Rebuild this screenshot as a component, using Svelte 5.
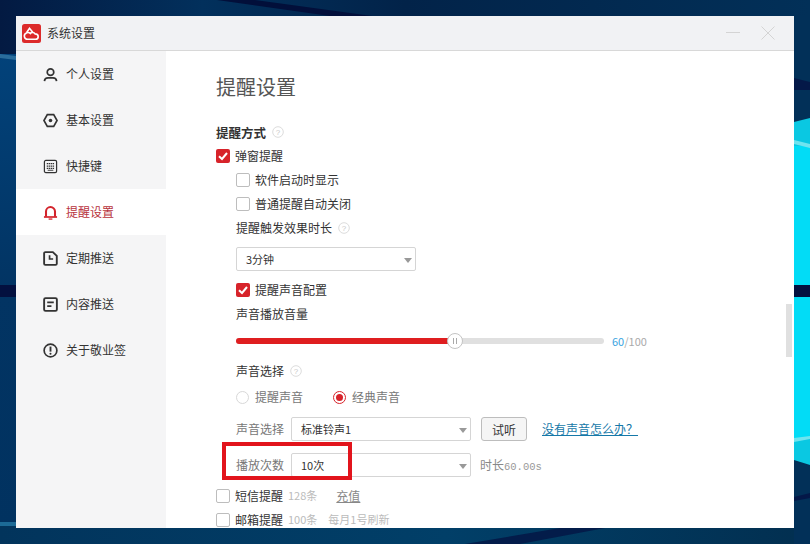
<script>
  const nav = [
    { label: '个人设置', icon: 'user' },
    { label: '基本设置', icon: 'hex' },
    { label: '快捷键', icon: 'kbd' },
    { label: '提醒设置', icon: 'bell', active: true },
    { label: '定期推送', icon: 'clock' },
    { label: '内容推送', icon: 'doc' },
    { label: '关于敬业签', icon: 'info' }
  ];
</script>

{#snippet help()}
  <svg class="help" width="12" height="12" viewBox="0 0 12 12">
    <circle cx="6" cy="6" r="5.3" fill="none" stroke="#dcdcdc" />
    <text x="6" y="8.8" text-anchor="middle" font-size="8" fill="#c8c8c8" font-family="Liberation Sans, sans-serif">?</text>
  </svg>
{/snippet}

{#snippet check(on)}
  <span class="cb" class:on>
    {#if on}
      <svg width="14" height="14" viewBox="0 0 14 14"><path d="M3 7.2 6 10 11 4" fill="none" stroke="#fff" stroke-width="2" /></svg>
    {/if}
  </span>
{/snippet}

{#snippet caret()}
  <span class="caret"></span>
{/snippet}

<div class="desktop">
  <svg class="wall" width="810" height="544" viewBox="0 0 810 544" preserveAspectRatio="none">
    <defs>
      <linearGradient id="top" x1="0" y1="0" x2="1" y2="0">
        <stop offset="0" stop-color="#031a42" />
        <stop offset="0.25" stop-color="#02305c" />
        <stop offset="0.5" stop-color="#022349" />
        <stop offset="1" stop-color="#023058" />
      </linearGradient>
      <linearGradient id="left" x1="0" y1="0" x2="0" y2="1">
        <stop offset="0" stop-color="#02427a" />
        <stop offset="0.5" stop-color="#023463" />
        <stop offset="1" stop-color="#013260" />
      </linearGradient>
      <linearGradient id="bottom" x1="0" y1="0" x2="1" y2="0">
        <stop offset="0" stop-color="#02345c" />
        <stop offset="0.55" stop-color="#013f68" />
        <stop offset="1" stop-color="#022f50" />
      </linearGradient>
    </defs>
    <rect width="810" height="544" fill="url(#top)" />
    <rect y="54" width="16" height="474" fill="url(#left)" />
    <rect y="526" width="810" height="18" fill="url(#bottom)" />
    <path d="M0 54 L16 56 L16 60 L0 58 Z" fill="#2a6d9c" />
    <path d="M0 522 L16 522 L16 526 L0 526 Z" fill="#1c6a96" />
    <rect y="285" width="16" height="12" fill="#03103f" />
    <path d="M217 0 L255 0 L372 16 L330 16 Z" fill="#020f3a" />
    <path d="M465 544 L520 544 L605 528 L560 528 Z" fill="#031c4a" />
    <rect x="794" y="16" width="16" height="104" fill="#023058" />
    <path d="M794 78 L810 82 L810 90 L794 90 Z" fill="#041848" />
    <path d="M794 122 L810 118 L810 465 L794 460 Z" fill="#0ac8e2" />
    <rect x="794" y="146" width="16" height="292" fill="#02dcf6" />
    <path d="M794 140 L810 144 L810 148 L794 144 Z" fill="#6fe4ef" />
    <path d="M794 438 L810 436 L810 439 L794 442 Z" fill="#6fe4ef" />
    <rect x="794" y="285" width="16" height="12" fill="#03103f" />
    <path d="M794 462 L810 466 L810 544 L794 544 Z" fill="#023058" />
    <path d="M794 497 L810 493 L810 498 L794 501 Z" fill="#041848" />
  </svg>

  <main class="window">
    <header class="title">
      <svg class="logo" width="19" height="19" viewBox="0 0 19 19">
        <rect width="19" height="19" rx="2.5" fill="#dc2a2a" />
        <path d="M4.500 8.800 7.500 4.300l3.300 3.900" fill="none" stroke="#fff" stroke-width="1.600" />
        <path d="M5.600 15.300a3.300 3.300 0 0 1-1.100-6.400c1.400-.7 2.900-.4 3.800.6 1-1.500 3.800-1.500 4.800.4 1.700.1 3.100 1.200 3.100 2.800 0 1.500-1.200 2.600-2.700 2.600Z" fill="none" stroke="#fff" stroke-width="1.600" />
      </svg>
      <span class="title-text">系统设置</span>
      <span class="win-btns">
        <svg width="14" height="2" viewBox="0 0 14 2"><rect width="14" height="1" fill="#d4d4d4" /></svg>
        <svg width="14" height="14" viewBox="0 0 14 14"><path d="M.5.5l13 13M13.500.5l-13 13" stroke="#d4d4d4" fill="none" /></svg>
      </span>
    </header>

    <div class="body">
      <nav class="side">
        {#each nav as n}
          <div class="nav" class:active={n.active}>
            <svg class="ic" width="15" height="15" viewBox="0 0 16 16" fill="none" stroke="currentColor" stroke-width="1.800">
              {#if n.icon === 'user'}
                <circle cx="8" cy="5.500" r="3.500" />
                <path d="M1.500 15c.3-2.700 2.200-3.400 3.800-3.400h5.400c1.600 0 3.500.7 3.800 3.400" />
              {:else if n.icon === 'hex'}
                <path d="M4.600 1.700h6.800L15 8l-3.600 6.300H4.600L1 8Z" />
                <circle cx="8" cy="8" r="1.900" fill="currentColor" stroke="none" />
              {:else if n.icon === 'kbd'}
                <rect x="1.500" y="1.500" width="13" height="13" rx="1.500" stroke-width="1.300" />
                <path d="M4 5h8M4 7.500h8M4 10h8" stroke-width="1.300" stroke-dasharray="1.500 .6" />
                <path d="M5 12h6" stroke-width="1" />
              {:else if n.icon === 'bell'}
                <path d="M3.200 12.500V7a4.800 4.800 0 0 1 9.600 0v5.500" stroke-width="2.200" />
                <path d="M1 12.800h14" stroke-width="1.800" />
                <path d="M6 15h4" stroke-width="1.400" />
              {:else if n.icon === 'clock'}
                <path d="M2.500 1.200h8l4.200 4v8.300a1.300 1.300 0 0 1-1.300 1.300H2.500a1.300 1.300 0 0 1-1.300-1.300V2.500a1.300 1.300 0 0 1 1.300-1.300Z" stroke-width="2" />
                <path d="M7 4.500V8.500h3.800" stroke-width="1.800" />
              {:else if n.icon === 'doc'}
                <rect x="1.200" y="1.200" width="13.600" height="13.600" rx="1.500" stroke-width="2" />
                <path d="M4.500 5.800h7M4.500 9.800h4.500" stroke-width="1.800" />
              {:else}
                <circle cx="8" cy="8" r="6.800" stroke-width="1.800" />
                <path d="M8 3.800v5.400" stroke-width="2" />
                <circle cx="8" cy="11.500" r="1.100" fill="currentColor" stroke="none" />
              {/if}
            </svg>
            <span>{n.label}</span>
          </div>
        {/each}
      </nav>

      <section class="content">
        <h1>提醒设置</h1>
        <div class="row head"><b>提醒方式</b>{@render help()}</div>
        <div class="row lab">{@render check(true)}<span>弹窗提醒</span></div>
        <div class="row lab in">{@render check(false)}<span>软件启动时显示</span></div>
        <div class="row lab in">{@render check(false)}<span>普通提醒自动关闭</span></div>
        <div class="row lab in"><span>提醒触发效果时长</span>{@render help()}</div>
        <div class="select short in-m"><span class="sv">3分钟</span>{@render caret()}</div>
        <div class="row lab in">{@render check(true)}<span>提醒声音配置</span></div>
        <div class="row lab in"><span>声音播放音量</span></div>
        <div class="slider">
          <div class="track"><div class="fill" style="width: 213px"></div><div class="thumb"><i></i><i></i></div></div>
          <span class="val"><em>60</em>/100</span>
        </div>
        <div class="row lab in vs"><span>声音选择</span>{@render help()}</div>
        <div class="row radios">
          <span class="radio"></span><span class="mut">提醒声音</span>
          <span class="radio on"></span><span class="mut">经典声音</span>
        </div>
        <div class="row line first">
          <span class="mut name">声音选择</span>
          <div class="select wide"><span class="sv">标准铃声1</span>{@render caret()}</div>
          <button>试听</button>
          <a href="#top">没有声音怎么办？</a>
        </div>
        <div class="row line">
          <span class="mut name">播放次数</span>
          <div class="select wide"><span class="sv">10次</span>{@render caret()}</div>
          <span class="dur">时长<span class="num">60.00s</span></span>
          <div class="mark"></div>
        </div>
        <div class="row lab sms">{@render check(false)}<span>短信提醒</span><span class="note">128条</span><span class="charge">充值</span></div>
        <div class="row lab">{@render check(false)}<span>邮箱提醒</span><span class="note">100条</span><span class="note fresh">每月1号刷新</span></div>
      </section>
      <div class="scrollbar"></div>
    </div>
  </main>
</div>

<style>
  :global(body) { margin: 0; background: #02305c; }
  .desktop {
    position: relative;
    width: 810px;
    height: 544px;
    padding: 16px;
    box-sizing: border-box;
    overflow: hidden;
    font-family: "Noto Sans CJK SC", "Liberation Sans", sans-serif;
    font-size: 12px;
    color: #333;
  }
  .wall { position: absolute; inset: 0; }
  .window {
    position: relative;
    width: 778px;
    height: 512px;
    background: #fff;
    display: flex;
    flex-direction: column;
    overflow: hidden;
  }
  .title {
    height: 34px;
    flex: none;
    background: #f1f2f4;
    border-bottom: 1px solid #d8d8d8;
    display: flex;
    align-items: center;
    padding-left: 6px;
    gap: 6px;
  }
  .title-text { color: #333; padding-bottom: 2px; }
  .win-btns {
    margin-left: auto;
    display: flex;
    align-items: center;
    gap: 21px;
    margin-right: 19px;
  }
  .body { flex: 1; display: flex; min-height: 0; position: relative; }
  .side {
    width: 150px;
    flex: none;
    background: #f5f5f6;
    display: flex;
    flex-direction: column;
  }
  .nav {
    height: 46px;
    display: flex;
    align-items: center;
    padding-left: 27px;
    gap: 8px;
    color: #333;
  }
  .nav span { padding-bottom: 2px; }
  .nav .ic { color: #333; flex: none; }
  .nav.active { background: #fff; color: #b8333c; }
  .nav.active .ic { color: #d3232b; }
  .content { flex: 1; padding: 0 0 0 50px; min-width: 0; }
  h1 {
    margin: 22px 0 19px;
    font-size: 20px;
    font-weight: 400;
    line-height: 28px;
    color: #555;
  }
  .row { display: flex; align-items: center; }
  .head { height: 24px; gap: 5px; }
  .head b { font-weight: 700; color: #333; font-size: 12.5px; }
  .lab { height: 24px; gap: 5px; }
  .lab > span:not(.cb), .line > span, .radios > span.mut { padding-bottom: 2px; }
  .in { margin-left: 20px; }
  .in-m { margin-left: 20px; }
  .help { flex: none; margin-left: 1px; }
  .cb {
    width: 14px;
    height: 14px;
    flex: none;
    box-sizing: border-box;
    border: 1px solid #bdbdbd;
    border-radius: 2px;
    background: #fff;
    display: flex;
  }
  .cb.on { background: #d7232a; border: 0; }
  .select {
    position: relative;
    height: 24px;
    box-sizing: border-box;
    border: 1px solid #d5d5d5;
    border-radius: 2px;
    background: #fff;
    display: flex;
    align-items: center;
  }
  .short { width: 180px; margin-top: 7px; margin-bottom: 7px; }
  .wide { width: 180px; }
  .sv { padding: 0 0 1px 9px; color: #333; font-size: 11px; }
  .caret {
    position: absolute;
    right: 3px;
    top: 10px;
    width: 0;
    height: 0;
    border: 4px solid transparent;
    border-top: 5px solid #999;
    border-bottom: 0;
  }
  .slider {
    margin: 3px 0 0 20px;
    height: 24px;
    display: flex;
    align-items: center;
  }
  .track {
    position: relative;
    width: 368px;
    height: 6px;
    border-radius: 3px;
    background: #e0e0e0;
  }
  .fill { height: 6px; border-radius: 3px 0 0 3px; background: #df1e20; }
  .thumb {
    position: absolute;
    left: 211px;
    top: -5px;
    width: 16px;
    height: 16px;
    box-sizing: border-box;
    border: 1px solid #c4c4c4;
    border-radius: 50%;
    background: #fff;
    display: flex;
    align-items: center;
    justify-content: center;
    gap: 2px;
  }
  .thumb i { width: 1px; height: 6px; background: #aaa; }
  .val { margin-left: 8px; color: #aaa; font-size: 11px; }
  .val em { font-style: normal; color: #3aa3df; }
  .vs { margin-top: 6px; }
  .radios { margin: 2px 0 0 20px; height: 24px; }
  .radio {
    width: 13px;
    height: 13px;
    box-sizing: border-box;
    border: 1px solid #d8d8d8;
    border-radius: 50%;
    background: #fff;
    margin-right: 6px;
    position: relative;
  }
  .radio.on { border: 1px solid #d7232a; margin-left: 30px; }
  .radio.on::after {
    content: '';
    position: absolute;
    left: 2px;
    top: 2px;
    width: 7px;
    height: 7px;
    border-radius: 50%;
    background: #d7232a;
  }
  .mut { color: #777; }
  .line { position: relative; margin-left: 20px; height: 24px; margin-top: 12px; }
  .first { margin-top: 8px; }
  .name { width: 55px; flex: none; }
  button {
    margin-left: 10px;
    width: 46px;
    height: 24px;
    padding: 0;
    border: 1px solid #bdbdbd;
    border-radius: 3px;
    background: #f5f5f5;
    font: inherit;
    color: #333;
  }
  a { margin-left: 15px; color: #1578a8; text-decoration: underline; padding-bottom: 2px; }
  .dur { margin-left: 9px; color: #888; }
  .num { font-family: "Liberation Mono", monospace; font-size: 10.5px; font-weight: 400; color: #999; }
  .mark {
    position: absolute;
    left: -14px;
    top: -11px;
    width: 130px;
    height: 38px;
    box-sizing: border-box;
    border: 4px solid #e2141c;
    pointer-events: none;
  }
  .sms { margin-top: 7px; }
  .note { color: #bbb; font-size: 11px; }
  .fresh { margin-left: 6px; }
  .charge { margin-left: 14px; color: #888; text-decoration: underline; }
  .scrollbar {
    position: absolute;
    right: 2px;
    top: 253px;
    width: 6px;
    height: 53px;
    background: #e0e0e0;
  }
</style>
